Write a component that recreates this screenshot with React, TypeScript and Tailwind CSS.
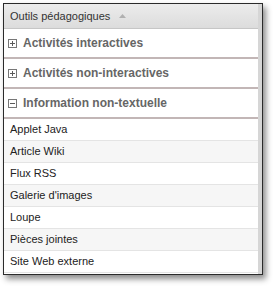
import React from 'react'

const categories = [
  { label: 'Activités interactives', open: false },
  { label: 'Activités non-interactives', open: false },
  { label: 'Information non-textuelle', open: true },
]

const items = [
  'Applet Java',
  'Article Wiki',
  'Flux RSS',
  "Galerie d'images",
  'Loupe',
  'Pièces jointes',
  'Site Web externe',
]

function ToggleIcon({ open }: { open: boolean }) {
  return (
    <svg width="9" height="9" viewBox="0 0 9 9" className="shrink-0">
      <rect x="0.5" y="0.5" width="8" height="8" fill="#fff" stroke="#777" />
      <line x1="2" y1="4.5" x2="7" y2="4.5" stroke="#5a5a5a" />
      {!open && <line x1="4.5" y1="2" x2="4.5" y2="7" stroke="#5a5a5a" />}
    </svg>
  )
}

export default function App() {
  return (
    <div
      className="h-[287px] w-[275px] bg-white pl-[3px] pt-[3px]"
      style={{ fontFamily: '"Liberation Sans", Arial, sans-serif' }}
    >
      <div className="flex h-[272px] w-[260px] border border-[#2b2b2b] bg-white shadow-[3px_4px_6px_rgba(0,0,0,0.45)]">
        <div className="flex min-w-0 flex-1 flex-col">
          {/* en-tête */}
          <div className="flex h-[25px] shrink-0 items-center gap-[9px] border-b border-[#c6c6c6] bg-gradient-to-b from-[#ececec] to-[#dcdcdc] pl-[6px] text-[11px] text-[#333]">
            <span>Outils pédagogiques</span>
            <svg width="7" height="4" viewBox="0 0 7 4">
              <polygon points="3.5,0 7,4 0,4" fill="#b0b0b0" />
            </svg>
          </div>

          {/* catégories */}
          {categories.map(c => (
            <div
              key={c.label}
              className="flex h-[30px] shrink-0 items-center gap-[6px] border-b-2 border-[#c2b6b6] pl-[4px] text-[12px] font-bold text-[#666]"
            >
              <ToggleIcon open={c.open} />
              <span>{c.label}</span>
            </div>
          ))}

          {/* éléments */}
          {items.map((item, i) => (
            <div
              key={item}
              className={`flex h-[22px] shrink-0 items-center border-b border-[#e4e4e4] pl-[6px] text-[11px] text-[#222] ${
                i % 2 === 1 ? 'bg-[#f6f6f6]' : 'bg-white'
              }`}
            >
              {item}
            </div>
          ))}
        </div>
        <div className="w-[4px] shrink-0 bg-[#d6d6d6]" />
      </div>
    </div>
  )
}
